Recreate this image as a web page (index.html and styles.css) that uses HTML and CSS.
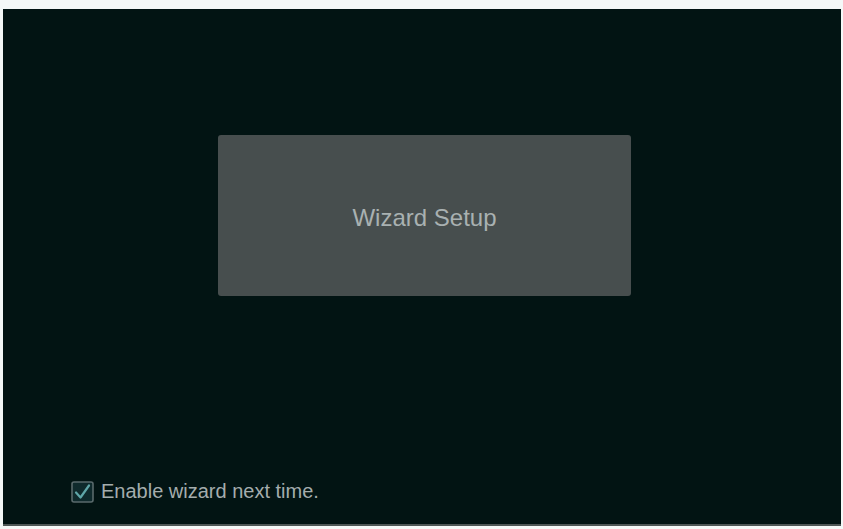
FILE: index.html
```html
<!DOCTYPE html>
<html>
<head>
<meta charset="utf-8">
<link rel="stylesheet" href="styles.css">
</head>
<body>
<div class="screen">
  <div class="center">
    <div class="wizard">Wizard Setup</div>
  </div>
  <div class="footer">
    <span class="check">
      <svg width="23" height="22" viewBox="0 0 23 22">
        <rect x="1" y="1" width="21" height="20" rx="2" fill="#0f2a2c" stroke="#5a6a6c" stroke-width="1.6"/>
        <path d="M5 11.5 L9.5 16.5 L18 4.5" fill="none" stroke="#5fa6a8" stroke-width="2.2" stroke-linecap="round" stroke-linejoin="round"/>
      </svg>
    </span>
    <span class="label">Enable wizard next time.</span>
  </div>
</div>
</body>
</html>
```
FILE: styles.css
```css
html, body {
  margin: 0;
  padding: 0;
  background: #f4f8f7;
  width: 843px;
  height: 529px;
  overflow: hidden;
}
.screen {
  margin: 9px 2px 0 3px;
  height: 517px;
  background: #021413;
  display: flex;
  flex-direction: column;
  border-bottom: 2px solid #4e5756;
  box-sizing: border-box;
  font-family: "Liberation Sans", Arial, sans-serif;
}
.center {
  padding: 126px 0 0 215px;
}
.wizard {
  width: 413px;
  height: 161px;
  background: #474e4e;
  border-radius: 3px;
  color: #a9b1b1;
  font-size: 24px;
  display: flex;
  align-items: center;
  justify-content: center;
  box-sizing: border-box;
  padding-top: 4px;
}
.footer {
  margin-top: auto;
  padding: 0 0 21px 68px;
  display: flex;
  align-items: center;
  gap: 7px;
}
.check {
  display: flex;
}
.label {
  color: #a4adad;
  font-size: 20px;
}
```
